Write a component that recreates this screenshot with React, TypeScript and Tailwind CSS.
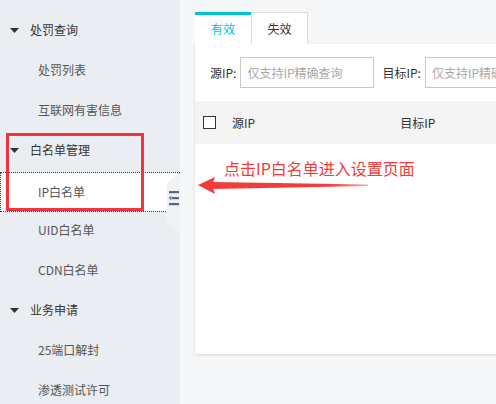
import React from "react";

const font = { fontFamily: '"Noto Sans CJK SC", "Noto Sans", sans-serif' };

function Tri() {
  return (
    <svg width="9" height="5" viewBox="0 0 9 5" className="shrink-0">
      <polygon points="0,0 9,0 4.5,5" fill="#333" />
    </svg>
  );
}

function Group({ label }: { label: string }) {
  return (
    <div className="h-10 flex items-center pl-[10px] text-[12px] text-[#333]">
      <Tri />
      <span className="ml-[11px]">{label}</span>
    </div>
  );
}

function Item({ label, active }: { label: string; active?: boolean }) {
  return (
    <div
      className={
        "h-10 flex items-center pl-[38px] text-[12px] text-[#555] " +
        (active ? "bg-white outline-1 outline-dotted outline-[#333] -outline-offset-1" : "")
      }
    >
      {label}
    </div>
  );
}

export default function App() {
  return (
    <div className="w-[496px] h-[404px] overflow-hidden flex relative bg-[#f6f7f9]" style={font}>
      {/* sidebar */}
      <div className="w-[180px] shrink-0 bg-[#eaedf1] pt-[10px] relative">
        <Group label="处罚查询" />
        <Item label="处罚列表" />
        <Item label="互联网有害信息" />
        <Group label="白名单管理" />
        <div className="pt-[2px]">
          <Item label="IP白名单" active />
        </div>
        <div className="-mt-[2px]">
          <Item label="UID白名单" />
        </div>
        <Item label="CDN白名单" />
        <Group label="业务申请" />
        <Item label="25端口解封" />
        <Item label="渗透测试许可" />

        {/* collapse handle */}
        <svg className="absolute left-[167px] top-[173px]" width="13" height="62" viewBox="0 0 13 62">
          <polygon points="0,10 13,0 13,62 0,49" fill="#f1f2f5" />
          <rect x="2" y="18" width="10" height="2.2" fill="#5b6576" />
          <rect x="5" y="24" width="7" height="2.2" fill="#5b6576" />
          <polygon points="1.5,25.1 4.5,22.6 4.5,27.6" fill="#3d8fe0" />
          <rect x="2" y="30" width="10" height="2.2" fill="#5b6576" />
        </svg>
      </div>

      {/* main */}
      <div className="flex-1 min-w-0 pt-[12px] pl-[15px]">
        <div className="flex h-[32px] text-[12px]">
          <div className="w-[56px] bg-white border-t-[3px] border-[#00c1de] flex items-center justify-center text-[#00c1de] pb-[1px]">
            有效
          </div>
          <div className="w-[57px] bg-white border border-b-0 border-[#dcdcdc] flex items-center justify-center text-[#333]">
            失效
          </div>
        </div>
        <div className="w-[320px] h-[310px] bg-white shadow-[0_1px_3px_rgba(0,0,0,0.15)]">
          <div className="flex items-center pt-[13px] pl-[15px] text-[12px] text-[#333] whitespace-nowrap">
            <span className="shrink-0">源IP:</span>
            <div className="shrink-0 ml-[4px] w-[134px] h-[31px] border border-[#c8c8c8] flex items-center pl-[6px] text-[#a8a8a8]">
              仅支持IP精确查询
            </div>
            <span className="shrink-0 ml-[8px]">目标IP:</span>
            <div className="shrink-0 ml-[4px] w-[100px] h-[31px] border border-r-0 border-[#c8c8c8] flex items-center pl-[6px] text-[#a8a8a8] overflow-hidden">
              仅支持IP精确
            </div>
          </div>
          <div className="mt-[13px] h-[43px] bg-[#f4f4f4] flex items-center text-[12px] text-[#333]">
            <div className="ml-[8px] w-[13px] h-[13px] border-[1.5px] border-[#333] bg-white" />
            <span className="ml-[16px]">源IP</span>
            <span className="ml-[145px]">目标IP</span>
          </div>
        </div>
      </div>

      {/* annotation: red box */}
      <div className="absolute left-[6px] top-[133px] w-[138px] h-[78px] border-[3px] border-[#f2333b]" />

      {/* annotation: text */}
      <div className="absolute left-[224px] top-[157px] text-[16px] leading-[22px] text-[#f23b3b] whitespace-nowrap">
        点击IP白名单进入设置页面
      </div>

      {/* annotation: arrow */}
      <svg className="absolute left-[198px] top-[176px]" width="172" height="19" viewBox="0 0 172 19">
        <defs>
          <linearGradient id="shaft" x1="0" x2="1" y1="0" y2="0">
            <stop offset="0" stopColor="#f23b3b" />
            <stop offset="0.75" stopColor="#f23b3b" />
            <stop offset="1" stopColor="#f8b0b0" />
          </linearGradient>
        </defs>
        <polygon points="0,9 17,1 15,6.5 15,12 17,18" fill="#f23b3b" />
        <polygon points="14,6 170,8.5 170,10 14,13" fill="url(#shaft)" />
      </svg>
    </div>
  );
}
